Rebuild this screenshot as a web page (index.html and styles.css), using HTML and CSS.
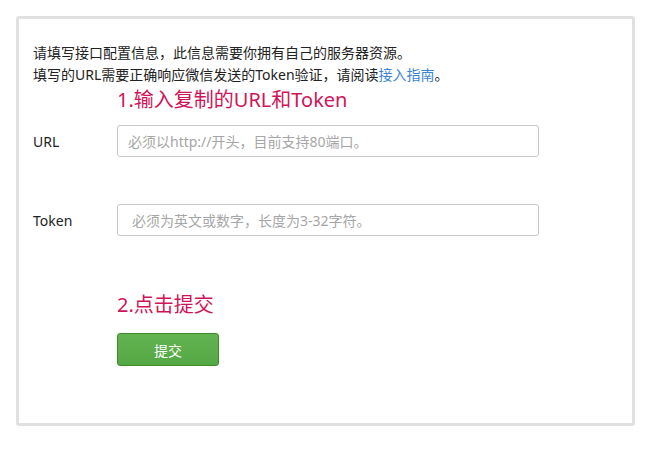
FILE: index.html
```html
<!DOCTYPE html>
<html lang="zh-CN">
<head>
<meta charset="utf-8">
<title>接口配置信息</title>
<link rel="stylesheet" href="styles.css">
</head>
<body>
<div class="panel">
  <p class="intro">请填写接口配置信息，此信息需要你拥有自己的服务器资源。<br>填写的URL需要正确响应微信发送的Token验证，请阅读<a class="link" href="#">接入指南</a>。</p>
  <div class="step step-first">1.输入复制的URL和Token</div>
  <div class="field">
    <label class="field-label">URL</label>
    <input class="field-input" type="text" placeholder="必须以http://开头，目前支持80端口。">
  </div>
  <div class="field field-second">
    <label class="field-label">Token</label>
    <input class="field-input field-input-wide" type="text" placeholder="必须为英文或数字，长度为3-32字符。">
  </div>
  <div class="step step-second">2.点击提交</div>
  <button class="submit" type="button">提交</button>
</div>
</body>
</html>
```
FILE: styles.css
```css
html, body {
  margin: 0;
  padding: 0;
  background: #ffffff;
}

body {
  font-family: "Noto Sans", "Noto Sans CJK SC", sans-serif;
  color: #222222;
}

.panel {
  box-sizing: border-box;
  width: 619px;
  height: 410px;
  margin: 16px 0 0 16px;
  border: 3px solid #e1e1e1;
  border-radius: 3px;
  padding: 23px 14px 0 14px;
  display: flex;
  flex-direction: column;
  align-items: flex-start;
}

.intro {
  margin: 0;
  font-size: 14px;
  line-height: 22px;
  color: #222222;
}

.link {
  color: #3a84d4;
  text-decoration: none;
}

.step {
  margin-left: 84px;
  font-size: 20px;
  line-height: 26px;
  color: #cf1559;
}

.step-first {
  margin-top: 1px;
}

.step-second {
  margin-top: 56px;
}

.field {
  display: flex;
  align-items: center;
  margin-top: 12px;
}

.field-second {
  margin-top: 47px;
}

.field-label {
  width: 84px;
  font-size: 14px;
  color: #222222;
}

.field-input {
  box-sizing: border-box;
  width: 422px;
  height: 32px;
  margin: 0;
  padding: 0 10px;
  border: 1px solid #c9c9c9;
  border-radius: 3px;
  font-family: "Noto Sans", "Noto Sans CJK SC", sans-serif;
  font-size: 14px;
  color: #222222;
  outline: none;
}

.field-input-wide {
  padding-left: 14px;
}

.field-input::placeholder {
  color: #a6a6a6;
}

.submit {
  box-sizing: border-box;
  width: 102px;
  height: 33px;
  margin: 15px 0 0 84px;
  padding: 0;
  border: 1px solid #3f8b2c;
  border-radius: 3px;
  background: linear-gradient(#62b452, #54a843);
  color: #ffffff;
  font-family: "Noto Sans", "Noto Sans CJK SC", sans-serif;
  font-size: 14px;
  cursor: pointer;
}
```
